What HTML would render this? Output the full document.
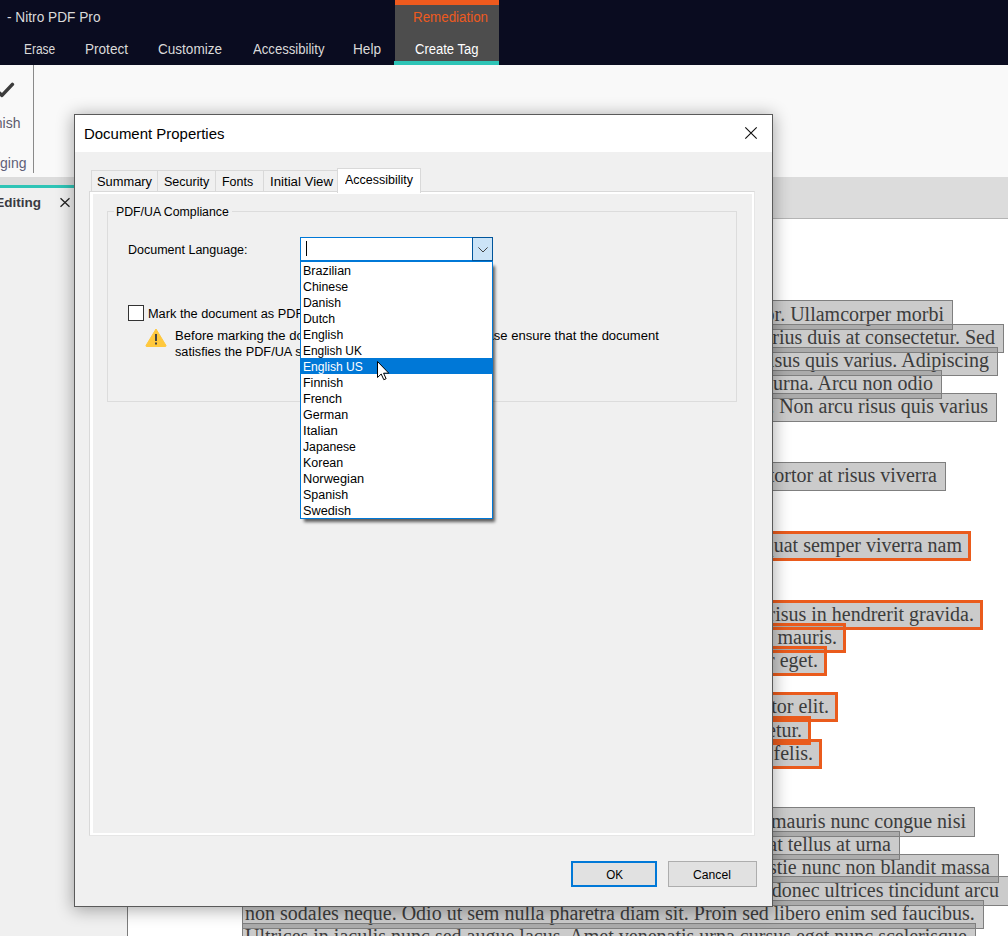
<!DOCTYPE html>
<html lang="en">
<head>
<meta charset="utf-8">
<title>Nitro PDF Pro - Document Properties</title>
<style>
*{box-sizing:border-box;margin:0;padding:0}
html,body{width:1008px;height:936px;overflow:hidden;background:#fff}
body{position:relative;font-family:"Liberation Sans",sans-serif;color:#000}
.abs{position:absolute}
.t{position:absolute;white-space:nowrap;line-height:1;z-index:3}
/* top app bar */
#topbar{left:0;top:0;width:1008px;height:65px;background:#0a0c20}
#remtab{left:395px;top:0;width:104px;height:65px;background:#4d4d4d}
#remtab .or{left:0;top:0;width:104px;height:5px;background:#ee5a1e}
#remtab .tl{left:-1px;top:61px;width:105px;height:4px;background:#2ec4b6}
/* ribbon */
#ribbon{left:0;top:65px;width:1008px;height:112px;background:#f9f9f9}
#ribsep{left:33px;top:65px;width:1px;height:108px;background:#8a8a8a}
#tabstrip{left:0;top:177px;width:1008px;height:42px;background:#dcdcdc;border-bottom:1px solid #b4b4b4}
#leftpane{left:0;top:188px;width:127px;height:748px;background:#f0f0f0}
#teal{left:0;top:185px;width:127px;height:3px;background:#2ec4b6}
#pageedge{left:127px;top:219px;width:1px;height:717px;background:#7c7c7c}
/* doc text */
.lf{position:absolute;left:242px;background:rgba(120,120,120,.39)}
.ln{position:absolute;left:242px;height:29px;border:1px solid #7f7f7f;font-family:"Liberation Serif",serif;font-size:20px;color:#3c3c3c;white-space:nowrap;display:flex;justify-content:flex-end;align-items:flex-start;padding:1px 8px 0 2px;overflow:hidden;line-height:23px}
.ln.l{justify-content:flex-start}
.ln.o{border:3px solid #ea5b1c;padding:0 6px 0 0;margin-top:0}
.ln.o span{margin-top:0}
/* dialog */
#dlg{left:74px;top:114px;width:699px;height:793px;background:#f0f0f0;border:1px solid #5a5a5a;box-shadow:0 2px 16px 1px rgba(0,0,0,.33)}
#dlgtitle{left:0;top:0;width:697px;height:37px;background:#fff}
.tab{position:absolute;top:55px;height:22px;background:#f0f0f0;border:1px solid #d9d9d9;border-bottom:none}
#tabA{top:53px;height:25px;background:#fff;z-index:2}
#panel{left:14px;top:76px;width:666px;height:645px;border:1px solid #d9d9d9;border-right-color:#e6e6e6;border-bottom-color:#e6e6e6;background:#f0f0f0;box-shadow:inset 3px 2px 0 0 #fff,inset -2px -2px 0 0 #fff}
#grp{left:32px;top:96px;width:630px;height:191px;border:1px solid #dcdcdc}
#grplbl{left:39px;top:90px;width:118px;height:14px;background:#f0f0f0}
#combo{left:225px;top:122px;width:193px;height:24px;background:#fff;border:1px solid #0078d7}
#combobtn{left:397px;top:122px;width:21px;height:24px;background:#cce4f7;border:1px solid #00559b}
#caret{left:231px;top:126px;width:1px;height:15px;background:#000}
#list{left:225px;top:146px;width:193px;height:258px;background:#fff;border:1px solid #0078d7;box-shadow:3px 4px 3px -1px rgba(0,0,0,.62);z-index:5}
#hl{left:0;top:96px;width:191px;height:16px;background:#0078d7}
#chk{left:53px;top:190px;width:16px;height:16px;background:#fff;border:1px solid #333}
.btn{position:absolute;top:746px;height:26px;background:#e1e1e1;border:1px solid #adadad}
#ok{left:496px;width:86px;border:2px solid #0078d7}
#cancel{left:593px;width:89px}
svg{position:absolute;overflow:visible}
</style>
</head>
<body>
<div id="topbar" class="abs"></div>
<div id="remtab" class="abs"><div class="abs or"></div><div class="abs tl"></div></div>
<div id="ribbon" class="abs"></div>
<div id="ribsep" class="abs"></div>
<div id="tabstrip" class="abs"></div>
<div id="leftpane" class="abs"></div>
<div id="teal" class="abs"></div>
<div id="pageedge" class="abs"></div>
<!-- ribbon check icon -->
<svg style="left:-6px;top:82px" width="22" height="18" viewBox="0 0 22 18"><path d="M2.5 8.3 L8 13.4 L18.4 2.4" fill="none" stroke="#3c3c3c" stroke-width="3.5" stroke-linecap="round" stroke-linejoin="round"/></svg>
<!-- doc tab close -->
<svg style="left:60px;top:198px" width="10" height="9" viewBox="0 0 10 9"><path d="M0.5 0.3 L9.5 8.7 M9.5 0.3 L0.5 8.7" stroke="#222" stroke-width="1.3" fill="none"/></svg>
<div class="t" style="left:7.00px;top:10.00px;font-size:14px;color:#dadada;transform:scaleX(0.9771);transform-origin:0 0">- Nitro PDF Pro</div>
<div class="t" style="left:23.75px;top:42.00px;font-size:14px;color:#dadada;transform:scaleX(0.8543);transform-origin:0 0">Erase</div>
<div class="t" style="left:84.50px;top:42.00px;font-size:14px;color:#dadada;transform:scaleX(0.9694);transform-origin:0 0">Protect</div>
<div class="t" style="left:158.00px;top:42.00px;font-size:14px;color:#dadada;transform:scaleX(0.9676);transform-origin:0 0">Customize</div>
<div class="t" style="left:252.50px;top:42.00px;font-size:14px;color:#dadada;transform:scaleX(0.9377);transform-origin:0 0">Accessibility</div>
<div class="t" style="left:353.00px;top:42.00px;font-size:14px;color:#dadada;transform:scaleX(0.9723);transform-origin:0 0">Help</div>
<div class="t" style="left:415.00px;top:42.00px;font-size:14px;color:#ffffff;transform:scaleX(0.9306);transform-origin:0 0">Create Tag</div>
<div class="t" style="left:412.50px;top:10.00px;font-size:14px;color:#ee5a1e;transform:scaleX(0.9541);transform-origin:0 0">Remediation</div>
<div class="t" style="left:-16.86px;top:116.00px;font-size:14px;color:#5c5a6c;transform:scaleX(1.0000);transform-origin:100% 0">Finish</div>
<div class="t" style="left:-22.55px;top:156.00px;font-size:14px;color:#5f5f78;transform:scaleX(1.0000);transform-origin:100% 0">Tagging</div>
<div class="t" style="left:-3.45px;top:196.00px;font-size:13px;color:#3a3a42;transform:scaleX(1.0400);transform-origin:100% 0;font-weight:700">Editing</div>
<div class="lf" style="top:300px;height:30px;width:711px"></div>
<div class="lf" style="top:324px;height:29px;width:762px"></div>
<div class="lf" style="top:347px;height:29px;width:756px"></div>
<div class="lf" style="top:370px;height:29px;width:700px"></div>
<div class="lf" style="top:393px;height:29px;width:755px"></div>
<div class="lf" style="top:462px;height:29px;width:704px"></div>
<div class="lf" style="top:531px;height:30px;width:729px"></div>
<div class="lf" style="top:600px;height:30px;width:741px"></div>
<div class="lf" style="top:623px;height:30px;width:604px"></div>
<div class="lf" style="top:646px;height:30px;width:585px"></div>
<div class="lf" style="top:692px;height:30px;width:596px"></div>
<div class="lf" style="top:716px;height:29px;width:569px"></div>
<div class="lf" style="top:739px;height:30px;width:580px"></div>
<div class="lf" style="top:807px;height:30px;width:733px"></div>
<div class="lf" style="top:831px;height:29px;width:658px"></div>
<div class="lf" style="top:854px;height:29px;width:757px"></div>
<div class="lf" style="top:876px;height:30px;width:770px"></div>
<div class="lf" style="top:900px;height:29px;width:742px"></div>
<div class="lf" style="top:923px;height:29px;width:734px"></div>
<div class="ln" style="top:300px;height:30px;width:711px;padding:2px 8px 0 2px"><span>Lorem ipsum dolor sit amet, consectetur adipiscing elit tempor. Ullamcorper morbi</span></div>
<div class="ln" style="top:324px;height:29px;width:762px;padding:1px 8px 0 2px"><span>tincidunt ornare massa eget egestas purus viverra. Varius duis at consectetur. Sed</span></div>
<div class="ln" style="top:347px;height:29px;width:756px;padding:1px 8px 0 2px"><span>faucibus turpis in eu mi bibendum. Non arcu risus quis varius. Adipiscing</span></div>
<div class="ln" style="top:370px;height:29px;width:700px;padding:1px 8px 0 2px"><span>elit pellentesque habitant morbi tristique senectus et urna. Arcu non odio</span></div>
<div class="ln" style="top:393px;height:29px;width:755px;padding:1px 8px 0 2px"><span>euismod lacinia at quis risus sed vulputate. Non arcu risus quis varius</span></div>
<div class="ln" style="top:462px;height:29px;width:704px;padding:1px 8px 0 2px"><span>Sit amet consectetur adipiscing elit duis tristique. Id tortor at risus viverra</span></div>
<div class="ln o" style="top:531px;height:30px;width:729px;padding:-1px 6px 0 0px"><span>Amet porttitor eget dolor morbi non arcu. Consequat semper viverra nam</span></div>
<div class="ln o" style="top:600px;height:30px;width:741px;padding:-1px 6px 0 0px"><span>Vitae congue mauris rhoncus aenean vel elit. Sed risus in hendrerit gravida.</span></div>
<div class="ln o" style="top:623px;height:30px;width:604px;padding:-1px 6px 0 0px"><span>Pulvinar etiam non quam lacus suspendisse faucibus interdum. Ac mauris.</span></div>
<div class="ln o" style="top:646px;height:30px;width:585px;padding:-1px 6px 0 0px"><span>Tellus in metus vulputate eu scelerisque felis imperdiet proin. Semper eget.</span></div>
<div class="ln o" style="top:692px;height:30px;width:596px;padding:0px 6px 0 0px"><span>Massa sapien faucibus et molestie ac feugiat sed lectus. Auctor elit.</span></div>
<div class="ln o" style="top:716px;height:29px;width:569px;padding:-1px 6px 0 0px"><span>Nisl tincidunt eget nullam non nisi est sit amet. Consectetur.</span></div>
<div class="ln o" style="top:739px;height:30px;width:580px;padding:-1px 6px 0 0px"><span>Eget nulla facilisi etiam dignissim diam quis enim. Felis felis.</span></div>
<div class="ln" style="top:807px;height:30px;width:733px;padding:2px 8px 0 2px"><span>Faucibus a pellentesque sit amet porttitor eget dolor. In mauris nunc congue nisi</span></div>
<div class="ln" style="top:831px;height:29px;width:658px;padding:1px 8px 0 2px"><span>vitae suscipit tellus mauris a diam maecenas. Volutpat tellus at urna</span></div>
<div class="ln" style="top:854px;height:29px;width:757px;padding:1px 8px 0 2px"><span>condimentum mattis pellentesque id nibh tortor. Molestie nunc non blandit massa</span></div>
<div class="ln" style="top:876px;height:30px;width:770px;padding:2px 12px 0 2px"><span>enim nec dui nunc mattis enim ut tellus elementum. Vel donec ultrices tincidunt arcu</span></div>
<div class="ln l" style="top:900px;height:29px;width:742px;padding:1px 8px 0 2px"><span>non sodales neque. Odio ut sem nulla pharetra diam sit. Proin sed libero enim sed faucibus.</span></div>
<div class="ln l" style="top:923px;height:29px;width:734px;padding:1px 8px 0 2px"><span>Ultrices in iaculis nunc sed augue lacus. Amet venenatis urna cursus eget nunc scelerisque</span></div>
<div id="dlg" class="abs">
<div id="dlgtitle" class="abs"></div>
<svg style="left:670px;top:12px" width="12" height="12" viewBox="0 0 12 12"><path d="M0.3 0.3 L11.7 11.7 M11.7 0.3 L0.3 11.7" stroke="#111" stroke-width="1.15" fill="none"/></svg>
<div class="tab" style="left:16px;width:67px"></div>
<div class="tab" style="left:82px;width:59px"></div>
<div class="tab" style="left:140px;width:49px"></div>
<div class="tab" style="left:188px;width:75px"></div>
<div id="panel" class="abs"></div>
<div class="tab" id="tabA" style="left:262px;width:84px"></div>
<div id="grp" class="abs"></div>
<div id="grplbl" class="abs"></div>
<div id="combo" class="abs"></div>
<div id="combobtn" class="abs"><svg style="left:5px;top:9px" width="10" height="6" viewBox="0 0 10 6"><path d="M0.4 0.4 L5 5 L9.6 0.4" stroke="#3c3c3c" stroke-width="0.95" fill="none"/></svg></div>
<div id="caret" class="abs"></div>
<div id="chk" class="abs"></div>
<!-- warning icon -->
<svg style="left:70px;top:213px" width="22" height="19" viewBox="0 0 22 19"><path d="M11 1 L21 17.5 Q21.3 18.5 20 18.5 L2 18.5 Q0.7 18.5 1 17.5 Z" fill="#ffc83d" stroke="#ffc83d" stroke-width="1" stroke-linejoin="round"/><rect x="10" y="6" width="2" height="7" fill="#444"/><rect x="10" y="14.5" width="2" height="2" fill="#444"/></svg>
<div class="t" style="left:8.50px;top:11.00px;font-size:15.4px;color:#000;transform:scaleX(0.9718);transform-origin:0 0">Document Properties</div>
<div class="t" style="left:21.50px;top:61.00px;font-size:12px;color:#000;transform:scaleX(1.0712);transform-origin:0 0">Summary</div>
<div class="t" style="left:89.20px;top:61.00px;font-size:12px;color:#000;transform:scaleX(1.0448);transform-origin:0 0">Security</div>
<div class="t" style="left:147.40px;top:61.00px;font-size:12px;color:#000;transform:scaleX(1.0361);transform-origin:0 0">Fonts</div>
<div class="t" style="left:194.50px;top:61.00px;font-size:12px;color:#000;transform:scaleX(1.1025);transform-origin:0 0">Initial View</div>
<div class="t" style="left:270.00px;top:59.00px;font-size:12px;color:#000;transform:scaleX(1.0404);transform-origin:0 0">Accessibility</div>
<div class="t" style="left:41.20px;top:91.00px;font-size:12px;color:#000;transform:scaleX(1.0250);transform-origin:0 0">PDF/UA Compliance</div>
<div class="t" style="left:53.20px;top:129.00px;font-size:12px;color:#000;transform:scaleX(1.0418);transform-origin:0 0">Document Language:</div>
<div class="t" style="left:72.60px;top:193.00px;font-size:12px;color:#000;transform:scaleX(1.0625);transform-origin:0 0">Mark the document as PDF/UA compliant</div>
<div class="t" style="left:100.30px;top:215.00px;font-size:12px;color:#000;transform:scaleX(1.0900);transform-origin:0 0">Before marking the document as PDF/UA</div>
<div class="t" style="left:351.19px;top:215.00px;font-size:12px;color:#000;transform:scaleX(1.0850);transform-origin:100% 0">compliant, please ensure that the document</div>
<div class="t" style="left:100.30px;top:231.00px;font-size:12px;color:#000;transform:scaleX(1.0600);transform-origin:0 0">satisfies the PDF/UA standard requirements.</div>
<div class="t" style="left:530.83px;top:754.00px;font-size:12px;color:#000;transform:scaleX(0.9700);transform-origin:50% 0">OK</div>
<div class="t" style="left:618.00px;top:754.00px;font-size:12px;color:#000;transform:scaleX(1.0145);transform-origin:0 0">Cancel</div>
<div id="list" class="abs"><div id="hl" class="abs"></div>
<div class="t" style="left:1.60px;top:3.00px;font-size:12px;color:#000;transform:scaleX(1.0449);transform-origin:0 0">Brazilian</div>
<div class="t" style="left:1.60px;top:19.00px;font-size:12px;color:#000;transform:scaleX(1.0265);transform-origin:0 0">Chinese</div>
<div class="t" style="left:1.60px;top:35.00px;font-size:12px;color:#000;transform:scaleX(1.0171);transform-origin:0 0">Danish</div>
<div class="t" style="left:1.60px;top:51.00px;font-size:12px;color:#000;transform:scaleX(1.0236);transform-origin:0 0">Dutch</div>
<div class="t" style="left:1.60px;top:67.00px;font-size:12px;color:#000;transform:scaleX(1.0214);transform-origin:0 0">English</div>
<div class="t" style="left:1.60px;top:83.00px;font-size:12px;color:#000;transform:scaleX(0.9920);transform-origin:0 0">English UK</div>
<div class="t" style="left:1.60px;top:99.00px;font-size:12px;color:#fff;transform:scaleX(1.0088);transform-origin:0 0">English US</div>
<div class="t" style="left:1.60px;top:115.00px;font-size:12px;color:#000;transform:scaleX(1.0391);transform-origin:0 0">Finnish</div>
<div class="t" style="left:1.60px;top:131.00px;font-size:12px;color:#000;transform:scaleX(1.0466);transform-origin:0 0">French</div>
<div class="t" style="left:1.60px;top:147.00px;font-size:12px;color:#000;transform:scaleX(1.0425);transform-origin:0 0">German</div>
<div class="t" style="left:1.60px;top:163.00px;font-size:12px;color:#000;transform:scaleX(1.0896);transform-origin:0 0">Italian</div>
<div class="t" style="left:1.60px;top:179.00px;font-size:12px;color:#000;transform:scaleX(1.0164);transform-origin:0 0">Japanese</div>
<div class="t" style="left:1.60px;top:195.00px;font-size:12px;color:#000;transform:scaleX(1.0387);transform-origin:0 0">Korean</div>
<div class="t" style="left:1.60px;top:211.00px;font-size:12px;color:#000;transform:scaleX(1.0667);transform-origin:0 0">Norwegian</div>
<div class="t" style="left:1.60px;top:227.00px;font-size:12px;color:#000;transform:scaleX(1.0421);transform-origin:0 0">Spanish</div>
<div class="t" style="left:1.60px;top:243.00px;font-size:12px;color:#000;transform:scaleX(1.0604);transform-origin:0 0">Swedish</div>
</div>
<div class="btn" id="ok"></div>
<div class="btn" id="cancel"></div>
<!-- mouse cursor -->
<svg style="left:302px;top:246px;z-index:9" width="13" height="20" viewBox="0 0 13 20"><path d="M0.5 0.5 L0.5 16.5 L4.2 13 L6.8 18.7 L9.1 17.7 L6.6 12.2 L11.8 12.2 Z" fill="#fff" stroke="#000" stroke-width="1" stroke-linejoin="miter"/></svg>
</div>
</body>
</html>
